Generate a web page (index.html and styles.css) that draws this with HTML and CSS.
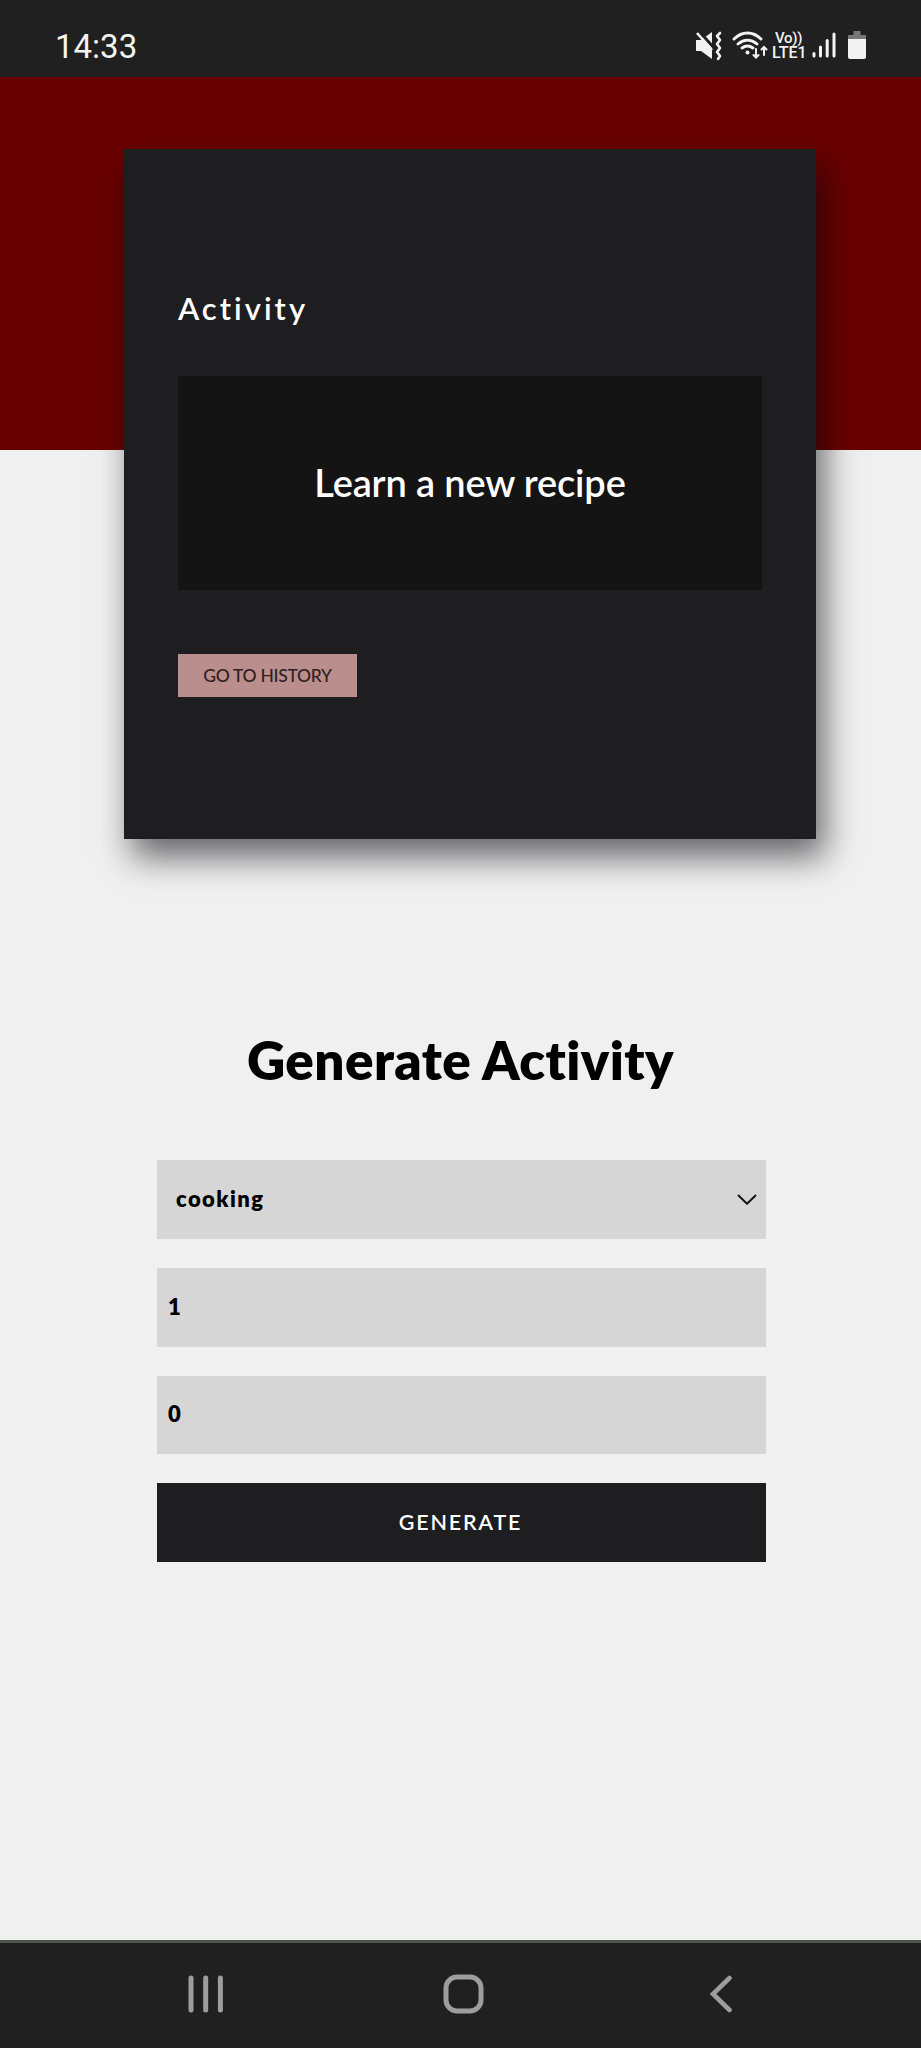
FILE: index.html
```html
<!DOCTYPE html>
<html lang="en">
<head>
<meta charset="utf-8">
<title>Generate Activity</title>
<link rel="stylesheet" href="styles.css">
</head>
<body>
<div class="screen">
  <header class="status">
    <span class="clock">14:33</span>
    <div class="indicators">
      <svg class="mute" width="28" height="30" viewBox="0 0 28 30">
        <path d="M1 9h5l11-8v27L6 20H1z" fill="#f2f2f2"/>
        <path d="M3 -1l16 18" stroke="#202020" stroke-width="3"/>
        <path d="M2 2l15 17" stroke="#f2f2f2" stroke-width="2.6"/>
        <path d="M25 2l-3 3 3 4-3 4 3 4-3 4 3 4-2 3" fill="none" stroke="#f2f2f2" stroke-width="2.6" stroke-linejoin="round" stroke-linecap="round"/>
      </svg>
      <svg class="wifi" width="36" height="30" viewBox="0 0 36 30" fill="none" stroke="#f2f2f2" stroke-width="2.9" stroke-linecap="round">
        <path d="M2 8c8-8 19-8 27 0M6 13c6-5 13-5 19 0M10 17c4-3 7-3 11 0"/>
        <circle cx="15.5" cy="21.500" r="2" fill="#f2f2f2" stroke="none"/>
        <path d="M24 18v8M21.500 24l2.500 2.500 2.500-2.500M32 24v-8M29.500 18.500l2.500-2.500 2.500 2.500" stroke-width="2"/>
      </svg>
      <div class="volte"><span class="vo">Vo))</span><span class="lte">LTE1</span></div>
      <svg class="signal" width="24" height="28" viewBox="0 0 24 28" fill="none" stroke="#f2f2f2" stroke-width="3" stroke-linecap="round">
        <path d="M2 22.500v2.500M8.500 16v9M15.200 9.500V25M22 3v22"/>
      </svg>
      <svg class="battery" width="18" height="28" viewBox="0 0 18 28">
        <path d="M5.500 0h7v4H18v5H0V4h5.500z" fill="#777"/>
        <path d="M0 8h18v18q0 2-2 2H2q-2 0-2-2z" fill="#f2f2f2"/>
      </svg>
    </div>
  </header>
  <div class="banner"></div>
  <main class="content">
    <section class="card">
      <h2 class="card-title">Activity</h2>
      <div class="result"><span class="result-text">Learn a new recipe</span></div>
      <button class="history"><span class="history-text">GO TO HISTORY</span></button>
    </section>
    <h1 class="title">Generate Activity</h1>
    <form class="form">
      <div class="field field-select">
        <span class="value">cooking</span>
        <svg class="chevron" width="20" height="12" viewBox="0 0 20 12" fill="none" stroke="#111" stroke-width="1.900" stroke-linecap="round" stroke-linejoin="round"><path d="M1.500 1.500l8.500 8.300 8.500-8.300"/></svg>
      </div>
      <div class="field"><span class="value">1</span></div>
      <div class="field"><span class="value">0</span></div>
      <button class="generate" type="button"><span class="generate-text">GENERATE</span></button>
    </form>
  </main>
  <nav class="nav">
    <svg width="36" height="38" viewBox="0 0 36 38" stroke="#9d9d9d" stroke-width="5" stroke-linecap="round"><path d="M3 3v32M17.700 3v32M32.400 3v32"/></svg>
    <svg class="home" width="41" height="40" viewBox="0 0 41 40" fill="none" stroke="#9d9d9d" stroke-width="5"><rect x="3" y="3" width="35" height="34" rx="11"/></svg>
    <svg width="24" height="38" viewBox="0 0 24 38" fill="none" stroke="#9d9d9d" stroke-width="4.600" stroke-linecap="round"><path d="M20.500 3L4 19l16.500 16"/></svg>
  </nav>
</div>
</body>
</html>
```
FILE: styles.css
```css
* { box-sizing: border-box; }
body { margin: 0; background: #f0f0f0; font-family: Lato, "Open Sans", sans-serif; }
button { border: 0; border-radius: 0; padding: 0; font-family: inherit; }
.screen { width: 921px; height: 2048px; display: flex; flex-direction: column; overflow: hidden; }
.status { height: 77px; flex: none; background: #202020; display: flex; justify-content: space-between; align-items: flex-start; padding: 31px 55px 0 55px; }
.clock { font: 400 33px/32px Roboto, sans-serif; color: #f4f4f4; }
.indicators { display: flex; align-items: flex-start; }
.mute { margin-right: 9px; }
.wifi { margin-right: 4px; }
.volte { width: 34px; margin-right: 6px; color: #f2f2f2; font-family: Roboto, sans-serif; font-weight: 500; white-space: nowrap; }
.vo { display: block; font-size: 15px; line-height: 14px; padding-left: 3px; letter-spacing: -.3px; }
.lte { display: block; font-size: 16px; line-height: 15px; }
.signal { margin-right: 12px; }
.banner { flex: none; height: 373px; background: #690000; }
.content { flex: 1; margin-top: -301px; display: flex; flex-direction: column; align-items: flex-start; }
.card { width: 692px; height: 690px; margin-left: 124px; padding: 0 54px; background: #1e1e20; box-shadow: 8px 18px 32px rgba(10, 10, 15, .6); display: flex; flex-direction: column; align-items: flex-start; }
.card-title { margin: 140px 0 48px; font-size: 31px; line-height: 39px; font-weight: 600; color: #fff; letter-spacing: 3px; }
.result { width: 584px; height: 214px; background: #141414; color: #fff; display: flex; align-items: center; justify-content: center; padding-bottom: 3px; font-size: 38px; font-weight: 600; }
.result-text { letter-spacing: -.15px; white-space: nowrap; }
.history { width: 179px; height: 43px; margin-top: 64px; padding-bottom: 1px; background: #ba8e8d; color: #302022; font-size: 17.5px; font-weight: 500; }
.history-text { letter-spacing: -.3px; }
.title { margin: 188px 0 0; width: 921px; font-size: 53px; line-height: 66px; font-weight: 800; text-align: center; letter-spacing: .4px; color: #000; }
.form { margin: 67px 0 0 157px; width: 609px; display: grid; grid-template-rows: 79px 79px 78px 79px; row-gap: 29px; }
.field { background: #d6d6d6; display: flex; align-items: center; padding: 0 9px 3px 11px; font-size: 22px; font-weight: 800; color: #000; }
.field-select { justify-content: space-between; padding-left: 19px; }
.chevron { margin-top: 4px; }
.value { letter-spacing: 1.4px; }
.generate { background: #1e1e20; color: #fff; padding: 0 2px 2px 0; font-size: 21.5px; font-weight: 600; }
.generate-text { letter-spacing: 1.8px; }
.nav { flex: none; height: 108px; background: #202020; border-top: 3px solid #505250; display: flex; align-items: center; justify-content: space-between; padding: 0 188px 4px 188px; }
.home { margin-right: 7px; }
```
